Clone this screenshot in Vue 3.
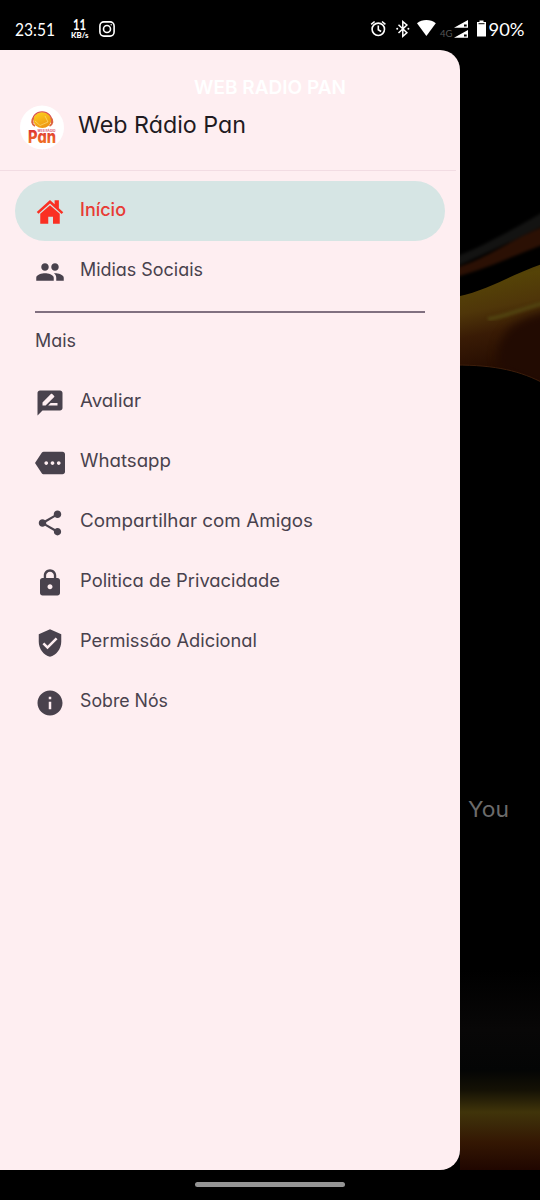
<script setup>
const primary = [
  { label: 'Início', width: 46, active: true, icon: 'home' },
  { label: 'Midias Sociais', width: 123, icon: 'people' }
]
const more = [
  { label: 'Avaliar', width: 61, icon: 'review' },
  { label: 'Whatsapp', width: 91, icon: 'more' },
  { label: 'Compartilhar com Amigos', width: 233, icon: 'share' },
  { label: 'Politica de Privacidade', width: 200, icon: 'lock' },
  { label: 'Permissão Adicional', width: 177, icon: 'shield' },
  { label: 'Sobre Nós', width: 88, icon: 'info' }
]
const paths = {
  home: 'M12 6.5 19.800 13.300v8.100h-5.400v-5.700h-3.800v5.700H4.200v-8.100zM1.400 12 12 2.400l3.700 3.400V2.600h3.400v6.300l3.500 3.200-1.300 1.400L12 5.200l-9.200 8.200z',
  people: 'M16 11c1.66 0 2.99-1.34 2.99-3S17.66 5 16 5s-3 1.34-3 3 1.34 3 3 3zm-8 0c1.66 0 2.99-1.34 2.99-3S9.66 5 8 5 5 6.34 5 8s1.34 3 3 3zm0 2c-2.33 0-7 1.17-7 3.5V19h14v-2.5c0-2.33-4.67-3.5-7-3.5zm8 0c-.29 0-.62.02-.97.05 1.16.84 1.97 1.97 1.97 3.45V19h6v-2.5c0-2.33-4.67-3.5-7-3.5z',
  review: 'M20 2H4c-1.1 0-1.99.9-1.99 2L2 22l4-4h14c1.1 0 2-.9 2-2V4c0-1.1-.9-2-2-2zM6 14v-2.47l6.88-6.88c.2-.2.51-.2.71 0l1.77 1.77c.2.2.2.51 0 .71L8.47 14H6zm12 0h-7.5l2-2H18v2z',
  more: 'M22 3H7c-.69 0-1.23.35-1.59.88L0 12l5.41 8.11c.36.53.97.89 1.66.89H22c1.1 0 2-.9 2-2V5c0-1.1-.9-2-2-2zM9 13.5c-.83 0-1.5-.67-1.5-1.5s.67-1.5 1.5-1.5 1.5.67 1.5 1.5-.67 1.5-1.5 1.5zm5 0c-.83 0-1.5-.67-1.5-1.5s.67-1.5 1.5-1.5 1.5.67 1.5 1.5-.67 1.5-1.5 1.5zm5 0c-.83 0-1.5-.67-1.5-1.5s.67-1.5 1.5-1.5 1.5.67 1.5 1.5-.67 1.5-1.5 1.5z',
  share: 'M18 16.08c-.76 0-1.44.3-1.96.77L8.91 12.7c.05-.23.09-.46.09-.7s-.04-.47-.09-.7l7.05-4.11c.54.5 1.25.81 2.04.81 1.66 0 3-1.34 3-3s-1.34-3-3-3-3 1.34-3 3c0 .24.04.47.09.7L8.04 9.81C7.5 9.31 6.79 9 6 9c-1.66 0-3 1.34-3 3s1.34 3 3 3c.79 0 1.5-.31 2.04-.81l7.12 4.16c-.05.21-.08.43-.08.65 0 1.61 1.31 2.92 2.92 2.92s2.92-1.31 2.92-2.92-1.31-2.92-2.92-2.92z',
  lock: 'M18 8h-1V6c0-2.76-2.24-5-5-5S7 3.24 7 6v2H6c-1.1 0-2 .9-2 2v10c0 1.1.9 2 2 2h12c1.1 0 2-.9 2-2V10c0-1.1-.9-2-2-2zm-6 9c-1.1 0-2-.9-2-2s.9-2 2-2 2 .9 2 2-.9 2-2 2zm3.1-9H8.9V6c0-1.71 1.39-3.1 3.1-3.1 1.71 0 3.1 1.39 3.1 3.1v2z',
  shield: 'M12 1 3 5v6c0 5.55 3.84 10.74 9 12 5.16-1.26 9-6.45 9-12V5l-9-4zm-2 16-4-4 1.41-1.41L10 14.17l6.59-6.59L18 9l-8 8z',
  info: 'M12 2C6.48 2 2 6.48 2 12s4.48 10 10 10 10-4.48 10-10S17.52 2 12 2zm1 15h-2v-6h2v6zm0-8h-2V7h2v2z'
}
</script>

<template>
  <div class="phone">
    <header class="status">
      <svg class="clock" width="41" height="20"><text x="0" y="16.500" textLength="40" lengthAdjust="spacingAndGlyphs">23:51</text></svg>
      <svg class="speed" width="18" height="22">
        <text x="2" y="12" class="rate" textLength="13" lengthAdjust="spacingAndGlyphs">11</text>
        <text x="0" y="20" class="unit" textLength="17.500" lengthAdjust="spacingAndGlyphs">KB/s</text>
      </svg>
      <svg class="insta" width="16" height="16" viewBox="0 0 16 16" fill="none" stroke="#fff" stroke-width="1.6">
        <rect x=".9" y=".9" width="14.2" height="14.2" rx="4" /><circle cx="8" cy="8" r="3.5" /><circle cx="12.2" cy="3.8" r=".4" stroke-width=".9" />
      </svg>
      <svg class="signals" width="155" height="24" viewBox="370 17 155 24">
        <g fill="none" stroke="#fff" stroke-width="1.6">
          <circle cx="378.3" cy="29.3" r="6.2" /><path d="M378.3 25.5v4.2l2.8 1.8M371.2 24.3l3.4-2.8M385.4 24.3l-3.4-2.8" />
          <path d="m398.5 24.7 8.4 8-4.1 3.6V21.6l4.1 3.4-8.4 8" stroke-width="1.5" />
        </g>
        <circle cx="397.2" cy="28.8" r="1" fill="#fff" /><circle cx="408.4" cy="28.8" r="1" fill="#fff" />
        <path fill="#fff" d="M417 23.2c5.2-4.2 13.6-4.2 18.8 0L426.400 36z" />
        <text class="net" x="440" y="37" textLength="12.500" lengthAdjust="spacingAndGlyphs">4G</text>
        <path fill="#fff" d="M454 27.800 468 20v7.800zM454 37.800 468 30v7.800z" />
        <path fill="#000" d="M464 24.500h2.700v2h-2.700zM464 34.500h2.700v2h-2.700z" />
        <path fill="#fff" d="M479.500 20.500h4V22h2.500v14.500h-9V22h2.500z" /><path fill="#000" d="M478.500 23.200h6v1h-6z" />
        <text class="battery" x="488.500" y="35.500" textLength="36" lengthAdjust="spacingAndGlyphs">90%</text>
      </svg>
    </header>

    <main class="stage">
      <svg class="backdrop" width="80" height="1120" viewBox="460 50 80 1120" color-interpolation-filters="sRGB">
        <defs>
          <linearGradient id="ribbon" x1="0" y1="0" x2="0.150" y2="1">
            <stop offset="0" stop-color="#40300a" /><stop offset=".2" stop-color="#554307" /><stop offset=".42" stop-color="#4f3609" /><stop offset=".62" stop-color="#391b05" /><stop offset="1" stop-color="#200800" />
          </linearGradient>
          <linearGradient id="glow" x1="0" y1="0" x2="0" y2="1">
            <stop offset="0" stop-color="#000" /><stop offset=".3" stop-color="#080707" /><stop offset=".5" stop-color="#040505" /><stop offset=".6" stop-color="#141105" /><stop offset=".71" stop-color="#40340a" /><stop offset=".77" stop-color="#3b2908" /><stop offset=".86" stop-color="#341703" /><stop offset="1" stop-color="#200600" />
          </linearGradient>
          <filter id="soft"><feGaussianBlur stdDeviation="1.800" /></filter>
          <filter id="wide" x="-30%" y="-30%" width="160%" height="160%"><feGaussianBlur stdDeviation="5" /></filter>
          <filter id="edge"><feGaussianBlur stdDeviation=".6" /></filter>
          <clipPath id="band"><path d="M455 297c34-6 58-24 90-34v121c-22-13-49-19-90-19z" /></clipPath>
        </defs>
        <g filter="url(#soft)">
          <path d="M455 257c26-10 52-24 90-46v14c-35 17-60 29-90 42z" fill="#131312" />
          <path d="M455 268c34-10 54-28 90-42v18c-32 12-59 25-90 33z" fill="#2b1004" />
        </g>
        <path filter="url(#edge)" d="M455 297c34-6 58-24 90-34v121c-22-13-49-19-90-19z" fill="url(#ribbon)" />
        <g clip-path="url(#band)">
          <path filter="url(#wide)" d="M512 326c14-9 25-13 40-15v80l-50-20c-8-10-6-30 10-45z" fill="#220b02" />
          <path filter="url(#soft)" d="M488 319c20-3 34-11 60-17" fill="none" stroke="#514310" stroke-width="4" />
        </g>
        <path filter="url(#edge)" d="M455 365c41 0 66 6 90 19" fill="none" stroke="#3d1e0b" />
        <path d="M460 970h80v200h-80z" fill="url(#glow)" />
      </svg>
      <svg class="peek" width="42" height="32"><text x="0" y="24" textLength="41" lengthAdjust="spacingAndGlyphs">You</text></svg>

      <aside class="drawer">
        <div class="brand">
          <svg class="logo" width="44" height="44" viewBox="0 0 44 44">
            <defs>
              <linearGradient id="ball" x1="0" y1="0" x2=".5" y2="1"><stop stop-color="#ffd51f" /><stop offset="1" stop-color="#ee9713" /></linearGradient>
              <linearGradient id="word" x1="0" y1="0" x2="0" y2="1"><stop stop-color="#d82338" /><stop offset="1" stop-color="#f58220" /></linearGradient>
            </defs>
            <circle cx="22" cy="22.500" r="22" fill="#fff" />
            <ellipse cx="22.300" cy="15" rx="9" ry="8" fill="url(#ball)" />
            <path d="M13 18C10 3 34 3 31.500 18" fill="none" stroke="#d94f4a" stroke-width="1.200" />
            <path d="M13.500 13c-2.500 2-2 6 1.500 8M31 13c2.500 2 2 6-1.500 8" fill="none" stroke="#dc6540" stroke-width="1.700" />
            <path d="m15 16 5 4.500 8-3.500-3-6" fill="none" stroke="#fff09b" stroke-width=".5" />
            <text class="tiny" x="17.500" y="26.800" textLength="18" lengthAdjust="spacingAndGlyphs">WEB RÁDIO</text>
            <text class="pan" x="8" y="37.500" textLength="28" lengthAdjust="spacingAndGlyphs" fill="url(#word)">Pan</text>
          </svg>
          <svg class="title" width="168" height="36"><text x="0" y="25" textLength="168" lengthAdjust="spacingAndGlyphs">Web Rádio Pan</text></svg>
          <svg class="ghost" width="153" height="24"><text x="0" y="18" textLength="152" lengthAdjust="spacingAndGlyphs">WEB RADIO PAN</text></svg>
        </div>
        <nav class="menu">
          <div v-for="item in primary" :key="item.label" class="item" :class="{ active: item.active }">
            <svg class="icon" width="30" height="30" viewBox="0 0 24 24"><path :d="paths[item.icon]" /></svg>
            <svg class="label" :width="item.width" height="60"><text x="0" y="34.500" :textLength="item.width" lengthAdjust="spacingAndGlyphs">{{ item.label }}</text></svg>
          </div>
          <hr class="rule" />
          <div class="section"><svg class="label" width="41" height="58"><text x="0" y="34" textLength="41" lengthAdjust="spacingAndGlyphs">Mais</text></svg></div>
          <div v-for="item in more" :key="item.label" class="item">
            <svg class="icon" width="30" height="30" viewBox="0 0 24 24"><path :d="paths[item.icon]" /></svg>
            <svg class="label" :width="item.width" height="60"><text x="0" y="34.500" :textLength="item.width" lengthAdjust="spacingAndGlyphs">{{ item.label }}</text></svg>
          </div>
        </nav>
      </aside>
    </main>
    <footer class="gesture"><span class="handle"></span></footer>
  </div>
</template>

<style>
body { margin: 0; background: #000; }
</style>
<style scoped>
.phone { width: 540px; height: 1200px; display: flex; flex-direction: column; background: #000; overflow: hidden; font-family: Inter, "Open Sans", sans-serif; font-feature-settings: "cv11" 1; }
svg { display: block; flex: none; overflow: visible; }
.status { height: 50px; display: flex; align-items: center; box-sizing: border-box; padding: 8px 15px 0 15px; color: #fff; }
.status text { fill: #fff; font-family: Lato, sans-serif; }
.clock { font-size: 17.500px; }
.speed { margin-left: 15px; }
.status .rate { font-size: 15px; font-weight: 700; }
.status .unit { font-size: 7.500px; font-weight: 900; }
.insta { margin-left: 10px; }
.signals { margin-left: auto; }
.status .net { font-size: 9.500px; fill: #555; }
.battery { font-size: 17.500px; }
.stage { height: 1120px; position: relative; }
.backdrop { position: absolute; right: 0; top: 0; overflow: hidden; }
.peek { position: absolute; left: 467.500px; top: 743px; font-size: 22px; }
.peek text { fill: #6b6b6b; }
.drawer { position: relative; width: 460px; height: 1120px; background: #feeef1; border-radius: 0 20px 20px 0; }
.brand { height: 120px; width: 456px; border-bottom: 1px solid #f2dce3; display: flex; align-items: flex-start; position: relative; }
.logo { margin: 55px 0 0 20px; }
.title { margin: 58px 0 0 13.500px; font-size: 23px; }
.title text { fill: #1f1a1f; }
.ghost { position: absolute; left: 194px; top: 26px; font-size: 19px; font-weight: 600; }
.ghost text { fill: #fff; }
.tiny { font-size: 3px; fill: #d54358; font-weight: 600; }
.pan { font-size: 17px; font-weight: 800; }
.menu { padding: 10px 15px 0; }
.item { display: flex; align-items: center; height: 60px; padding-left: 20px; gap: 15px; border-radius: 30px; }
.icon { fill: #49424d; margin-top: 1px; }
.label { font-size: 18px; }
.label text { fill: #49424d; }
.active { background: #d6e5e4; }
.active .icon { fill: #fa3023; }
.active .label text { fill: #e83a34; font-weight: 500; }
.rule { height: 2px; border: 0; background: #817080; margin: 10px 20px 0; }
.section { height: 59px; padding-left: 20px; }
.gesture { height: 30px; display: flex; justify-content: center; align-items: center; box-sizing: border-box; padding-bottom: 1px; }
.handle { width: 150px; height: 5px; border-radius: 3px; background: #949494; }
</style>
